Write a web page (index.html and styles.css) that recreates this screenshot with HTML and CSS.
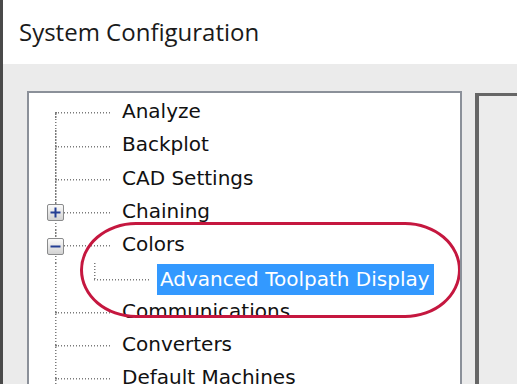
FILE: index.html
```html
<!DOCTYPE html>
<html>
<head>
<meta charset="utf-8">
<link rel="stylesheet" href="styles.css">
</head>
<body>
<div class="window">
  <div class="titlebar">System Configuration</div>
  <div class="content">
    <div class="tree-panel">
      <div class="tree">
        <div class="row first"><span></span><span></span><span></span><span class="label">Analyze</span></div>
        <div class="row"><span></span><span></span><span></span><span class="label">Backplot</span></div>
        <div class="row"><span></span><span></span><span></span><span class="label">CAD Settings</span></div>
        <div class="row"><span></span><span class="expander"><svg width="15" height="15" viewBox="0 0 15 15"><rect x="2.5" y="6.5" width="10" height="2" fill="#243f94"/><rect x="6.5" y="2.5" width="2" height="10" fill="#243f94"/></svg></span><span></span><span class="label">Chaining</span></div>
        <div class="row"><span></span><span class="expander"><svg width="15" height="15" viewBox="0 0 15 15"><rect x="2.5" y="6.5" width="10" height="2" fill="#243f94"/></svg></span><span></span><span class="label">Colors</span></div>
        <div class="row child"><span></span><span></span><span></span><span class="label selected">Advanced Toolpath Display</span></div>
        <div class="row"><span></span><span></span><span></span><span class="label">Communications</span></div>
        <div class="row"><span></span><span></span><span></span><span class="label">Converters</span></div>
        <div class="row"><span></span><span></span><span></span><span class="label">Default Machines</span></div>
      </div>
      <div class="highlight-ring"></div>
    </div>
    <div class="side-panel"></div>
  </div>
</div>
</body>
</html>
```

FILE: styles.css
```css
html, body {
  margin: 0;
  padding: 0;
}
body {
  width: 517px;
  height: 384px;
  overflow: hidden;
  background: #ebebeb;
}
.window {
  height: 384px;
  display: flex;
  flex-direction: column;
  border-left: 3px solid #4a4a4a;
  background: #ebebeb;
}
.titlebar {
  flex: none;
  height: 64px;
  box-sizing: border-box;
  background: #fff;
  padding: 15px 0 0 16px;
  font-family: "Open Sans", sans-serif;
  font-size: 24px;
  line-height: 34px;
  color: #1a1a1a;
}
.content {
  flex: 1;
  display: flex;
  gap: 13px;
  padding: 27px 0 0 24px;
  min-height: 0;
}
.tree-panel {
  position: relative;
  flex: none;
  width: 435px;
  box-sizing: border-box;
  border: 2px solid #8b9099;
  border-bottom: none;
  background: #fff;
  overflow: hidden;
}
.tree {
  padding-top: 3.4px;
  font-family: "DejaVu Sans", sans-serif;
  font-size: 20px;
  color: #111;
}
.row {
  height: 33.25px;
  display: grid;
  grid-template-columns: 18px 17px 58px auto;
  align-items: center;
  background-image:
    repeating-linear-gradient(to bottom, #7a7a7a 0 1.5px, transparent 1.5px 3px),
    repeating-linear-gradient(to right, #7a7a7a 0 1.5px, transparent 1.5px 3px);
  background-size: 1.5px 100%, 55px 1.5px;
  background-position: 26px 0, 26px 50%;
  background-repeat: no-repeat;
}
.row.first {
  background-size: 1.5px 50%, 55px 1.5px;
  background-position: 26px 100%, 26px 50%;
}
.row.child {
  background-image:
    repeating-linear-gradient(to bottom, #7a7a7a 0 1.5px, transparent 1.5px 3px),
    repeating-linear-gradient(to bottom, #7a7a7a 0 1.5px, transparent 1.5px 3px),
    repeating-linear-gradient(to right, #7a7a7a 0 1.5px, transparent 1.5px 3px);
  background-size: 1.5px 100%, 1.5px 50%, 56px 1.5px;
  background-position: 26px 0, 65px 0, 65px 50%;
}
.label {
  white-space: nowrap;
  line-height: 23px;
  padding-bottom: 3px;
}
.label.selected {
  margin-left: 35px;
  padding: 4px 4px 4px 3px;
  background: #3399ff;
  color: #fff;
  justify-self: start;
}
.expander {
  width: 17px;
  height: 17px;
  box-sizing: border-box;
  border: 1px solid #8a8b8c;
  border-radius: 2px;
  background: linear-gradient(#fbfbfb, #d2d2d2);
  display: flex;
  align-items: center;
  justify-content: center;
}
.expander svg {
  display: block;
}
.highlight-ring {
  position: absolute;
  left: 51px;
  top: 129px;
  width: 381px;
  height: 96px;
  box-sizing: border-box;
  border: 3px solid #c5173f;
  border-radius: 56px / 48px;
}
.side-panel {
  flex: 1;
  margin-top: 2px;
  border-top: 3px solid #666;
  border-left: 4px solid #666;
  background: #ececec;
}
```
